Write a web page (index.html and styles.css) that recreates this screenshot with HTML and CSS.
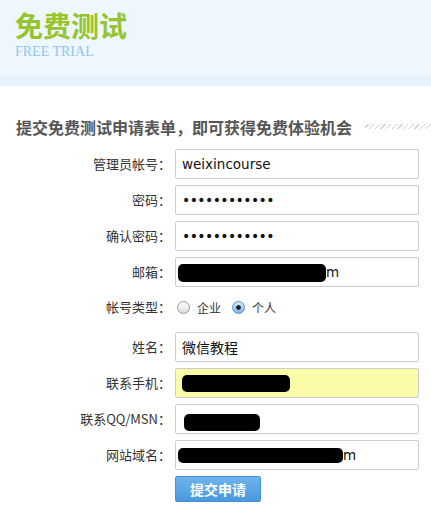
FILE: index.html
```html
<!DOCTYPE html>
<html lang="zh-CN">
<head>
<meta charset="utf-8">
<title>免费测试</title>
<link rel="stylesheet" href="styles.css">
</head>
<body>
<header class="banner">
  <h1 class="banner-title">免费测试</h1>
  <p class="banner-sub">FREE TRIAL</p>
</header>
<div class="banner-strip"></div>

<div class="section-head">
  <h2 class="section-title">提交免费测试申请表单，即可获得免费体验机会</h2>
  <span class="hatch"></span>
</div>

<form class="trial-form">
  <label class="lbl">管理员帐号：</label>
  <input class="field" type="text" value="weixincourse">

  <label class="lbl">密码：</label>
  <input class="field pwd" type="password" value="abcdefghijkl">

  <label class="lbl">确认密码：</label>
  <input class="field pwd" type="password" value="abcdefghijkl">

  <label class="lbl">邮箱：</label>
  <div class="field box"><span class="redact r-mail"></span><span class="tail">m</span></div>

  <label class="lbl lbl-radio">帐号类型：</label>
  <div class="radios">
    <input class="radio" type="radio" name="t" id="t1"><label class="rlabel" for="t1">企业</label>
    <input class="radio" type="radio" name="t" id="t2" checked><label class="rlabel" for="t2">个人</label>
  </div>

  <label class="lbl">姓名：</label>
  <input class="field cjk" type="text" value="微信教程">

  <label class="lbl">联系手机：</label>
  <div class="field box filled"><span class="redact r-phone"></span></div>

  <label class="lbl">联系QQ/MSN：</label>
  <div class="field box"><span class="redact r-qq"></span></div>

  <label class="lbl">网站域名：</label>
  <div class="field box"><span class="redact r-site"></span><span class="tail">m</span></div>

  <span></span>
  <div class="actions"><button class="submit" type="button">提交申请</button></div>
</form>
</body>
</html>
```

FILE: styles.css
```css
html, body {
  margin: 0;
  padding: 0;
  background: #fff;
}
body {
  width: 431px;
  font-family: "Noto Sans CJK SC", "DejaVu Sans", sans-serif;
  color: #333;
}

.banner {
  height: 76px;
  background: #eef7fe;
  padding: 10px 0 0 15px;
  box-sizing: border-box;
}
.banner-title {
  margin: 0;
  font-size: 28px;
  line-height: 30px;
  font-weight: 700;
  color: #96c42c;
  letter-spacing: 0;
}
.banner-sub {
  margin: 4px 0 0 0;
  font-family: "Liberation Serif", serif;
  font-size: 14px;
  line-height: 16px;
  color: #8fc7ec;
}
.banner-strip {
  height: 10px;
  background: #e4f3fe;
}

.section-head {
  display: flex;
  align-items: center;
  margin: 31px 0 12px 16px;
  height: 20px;
}
.section-title {
  margin: 0;
  font-size: 16px;
  line-height: 20px;
  font-weight: 700;
  color: #555;
  white-space: nowrap;
}
.hatch {
  flex: 1;
  height: 5px;
  margin-left: 13px;
  margin-top: -1px;
  background: repeating-linear-gradient(135deg, #fff 0 2px, #cfcfcf 2px 3px, #fff 3px 4px);
}

.trial-form {
  display: grid;
  grid-template-columns: 171px 244px;
  column-gap: 4px;
  row-gap: 6px;
  margin: 0;
}
.lbl {
  justify-self: end;
  align-self: center;
  font-size: 13px;
  line-height: 16px;
  color: #333;
  white-space: nowrap;
}
.lbl-radio {
  align-self: start;
  margin-top: 6px;
}
.field {
  box-sizing: border-box;
  width: 244px;
  height: 30px;
  margin: 0;
  border: 1px solid #cdcdcd;
  border-radius: 2px;
  background: #fff;
  padding: 0 6px;
  font-family: "DejaVu Sans", sans-serif;
  font-size: 13.5px;
  color: #111;
  outline: none;
}
.field.cjk {
  font-family: "Noto Sans CJK SC", sans-serif;
  font-size: 14px;
}
.field.pwd {
  font-size: 14px;
  letter-spacing: -0.6px;
}
.box {
  display: flex;
  align-items: center;
  padding-left: 2px;
}
.filled {
  background: #fafca7;
}
.redact {
  display: block;
  background: #000;
  border-radius: 5px;
}
.r-mail { width: 148px; height: 18px; margin-top: 2px; }
.r-phone { width: 108px; height: 17px; margin-left: 4px; margin-top: 1px; }
.r-qq { width: 76px; height: 17px; margin-left: 6px; margin-top: 6px; }
.r-site { width: 165px; height: 15px; margin-top: 1px; }
.tail {
  font-family: "DejaVu Sans", sans-serif;
  font-size: 13.5px;
  color: #111;
  margin-left: 0;
}

.radios {
  display: flex;
  align-items: center;
  height: 33px;
  box-sizing: border-box;
  padding: 0 0 4px 2px;
}
.radio {
  appearance: none;
  -webkit-appearance: none;
  box-sizing: border-box;
  width: 13px;
  height: 13px;
  margin: 0;
  border-radius: 50%;
  border: 1px solid #9a9a9a;
  background: linear-gradient(#ffffff, #dcdcdc);
}
.radio:checked {
  border-color: #5b8ec8;
  background: radial-gradient(circle at 50% 50%, #1a1a1a 0 2px, transparent 2.5px), linear-gradient(#d6e8fb, #7fb3ea);
}
.rlabel {
  font-size: 12px;
  color: #333;
  margin: 0 11px 0 7px;
  line-height: 16px;
}

.actions {
  display: flex;
}
.submit {
  width: 86px;
  height: 26px;
  margin: 0;
  padding: 0;
  border: 1px solid #4592d9;
  border-radius: 2px;
  background: linear-gradient(#6eb3ec, #4b98df);
  color: #fff;
  font-family: "Noto Sans CJK SC", sans-serif;
  font-weight: 700;
  font-size: 14px;
  line-height: 24px;
  letter-spacing: 0;
}
```
